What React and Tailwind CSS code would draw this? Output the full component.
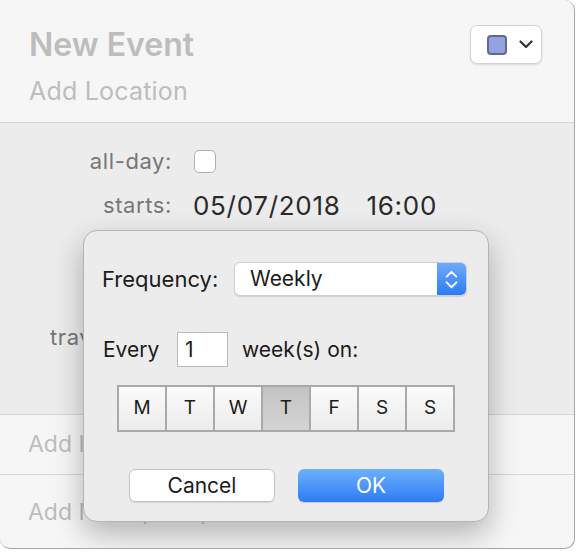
import React from "react"

const font = { fontFamily: "Inter, 'Noto Sans', sans-serif" }

const days = ["M", "T", "W", "T", "F", "S", "S"]

const labels = [
  { text: "all-day:", kind: "check" },
  { text: "starts:", kind: "date" },
  { text: "ends:", kind: "date" },
  { text: "repeat:", kind: "none" },
  { text: "travel time:", kind: "none" },
  { text: "alert:", kind: "none" },
]

const Chevron = ({ className }) => (
  <svg className={className} viewBox="0 0 14 9" fill="none">
    <path d="M1.5 1.5 7 7l5.5-5.5" stroke="currentColor" strokeWidth="2.2" strokeLinecap="round" strokeLinejoin="round" />
  </svg>
)

const RepeatPopover = () => {
  return (
    <div className="absolute left-[83px] top-[230px] w-[406px] h-[292px] rounded-[14px] border border-[#b3b3b3] bg-[#ececec] shadow-[0_12px_30px_rgba(0,0,0,0.28)] text-[#1b1b1b]">
      {/* frequency */}
      <div className="flex items-center mt-[31px] pl-[18px]">
        <p className="text-[22px] w-[132px]">Frequency:</p>
        <div className="flex h-[34px] w-[233px] rounded-[6px] bg-white border border-[#cfcfcf] shadow-[0_1px_1px_rgba(0,0,0,0.12)] overflow-hidden">
          <p className="flex-1 pl-[15px] text-[21px] leading-[32px]">Weekly</p>
          <div className="w-[29px] flex flex-col items-center justify-center gap-[3px] bg-gradient-to-b from-[#6eaafb] to-[#2c7bf5]">
            <svg className="w-[13px] h-[8px] text-white" viewBox="0 0 14 9" fill="none">
              <path d="M1.5 7.5 7 2l5.5 5.5" stroke="currentColor" strokeWidth="2" strokeLinecap="round" strokeLinejoin="round" />
            </svg>
            <Chevron className="w-[13px] h-[8px] text-white" />
          </div>
        </div>
      </div>

      {/* every n weeks */}
      <div className="flex items-center mt-[36px] pl-[19px]">
        <p className="text-[21px] w-[74px]">Every</p>
        <div className="w-[51px] h-[35px] bg-white border border-[#b9b9b9] text-[21px] pl-[7px] leading-[34px]">1</div>
        <p className="text-[21px] ml-[14px]">week(s) on:</p>
      </div>

      {/* days */}
      <div className="ml-[33px] mt-[18px] w-[338px] h-[47px] grid grid-cols-7 gap-[2px] p-[2px] bg-[#a9a9a9]">
        {days.map((d, i) => (
          <div
            key={i}
            className={`flex items-center justify-center text-[19px] ${
              i === 3
                ? "bg-gradient-to-b from-[#c3c3c3] to-[#d4d4d4]"
                : "bg-gradient-to-b from-[#fbfbfb] to-[#ececec]"
            }`}
          >
            {d}
          </div>
        ))}
      </div>

      {/* buttons */}
      <div className="flex gap-[23px] ml-[45px] mt-[37px]">
        <button className="w-[146px] h-[33px] rounded-[6px] bg-white border border-[#c4c4c4] shadow-[0_1px_1px_rgba(0,0,0,0.1)] text-[21px]">
          Cancel
        </button>
        <button className="w-[146px] h-[33px] rounded-[6px] bg-gradient-to-b from-[#6db0fb] to-[#2d7bf5] shadow-[0_1px_1px_rgba(0,0,0,0.15)] text-white text-[21px]">
          OK
        </button>
      </div>
    </div>
  )
}

export default function App() {
  return (
    <div className="w-[577px] h-[553px] bg-white overflow-hidden" style={font}>
      <div className="relative w-[575px] h-[549px] rounded-tr-[10px] rounded-br-[10px] rounded-bl-[10px] border-r border-b border-[#a5a5a5] bg-[#f6f6f6] overflow-hidden">
        {/* header */}
        <div className="h-[123px] flex justify-between pl-[29px] pr-[32px] border-b border-[#d6d6d6]">
          <div className="pt-[26px]">
            <h1 className="text-[32px] leading-[38px] font-semibold text-[#bdbdbd]">New Event</h1>
            <p className="text-[25px] leading-[30px] mt-[12px] text-[#bdbdbd] tracking-[0.2px]">Add Location</p>
          </div>
          <div className="mt-[25px] w-[72px] h-[39px] rounded-[7px] bg-white border border-[#d3d3d3] shadow-[0_1px_2px_rgba(0,0,0,0.12)] flex items-center pl-[16px] gap-[12px]">
            <div className="w-[20px] h-[20px] rounded-[4px] bg-[#93a3e0] border-2 border-[#5f6795]"></div>
            <Chevron className="w-[14px] h-[9px] text-[#333]" />
          </div>
        </div>

        {/* date/time section */}
        <div className="h-[292px] bg-[#ececec] pt-[16px] border-b border-[#d6d6d6]">
          {labels.map((row) => (
            <div key={row.text} className="flex items-center h-[44px]">
              <p className="w-[172px] text-right text-[22px] tracking-[0.6px] text-[#777]">{row.text}</p>
              {row.kind === "check" && (
                <div className="ml-[22px] w-[22px] h-[23px] rounded-[5px] bg-white border border-[#b1b1b1]"></div>
              )}
              {row.kind === "date" && (
                <div className="ml-[21px] flex gap-[26px] text-[26px] tracking-[0.7px] text-[#2a2a2a]">
                  <span>05/07/2018</span>
                  <span>16:00</span>
                </div>
              )}
            </div>
          ))}
        </div>

        {/* extra rows */}
        <div className="h-[60px] flex items-center pl-[28px] border-b border-[#d6d6d6]">
          <p className="text-[23px] text-[#bdbdbd]">Add Invitees</p>
        </div>
        <div className="h-[72px] pt-[20px] pl-[28px]">
          <p className="text-[23px] text-[#bdbdbd]">Add Notes, URL, or Attachments</p>
        </div>

        <RepeatPopover />
      </div>
    </div>
  )
}
